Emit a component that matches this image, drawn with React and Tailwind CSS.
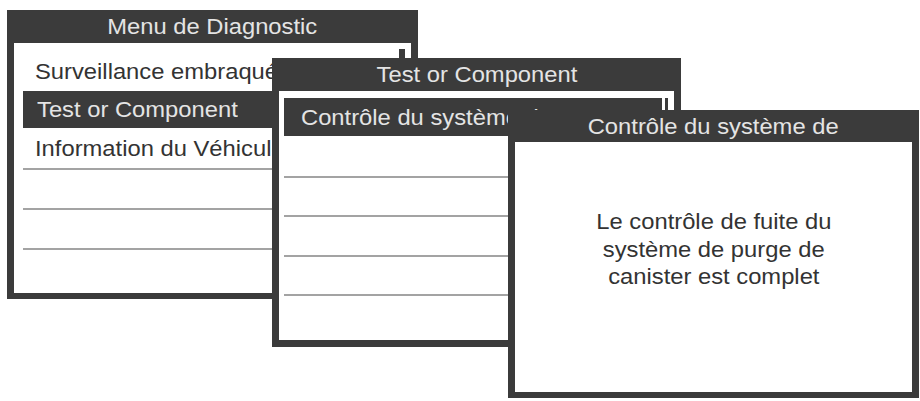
import React from "react";

const font = { fontFamily: '"Liberation Sans", Arial, Helvetica, sans-serif' };

function Line() {
  return <div className="h-[2px] bg-[#a3a3a3]" />;
}

function T({ children, center }) {
  return (
    <span
      className={
        center
          ? "inline-block scale-x-[1.08] origin-center whitespace-nowrap"
          : "inline-block scale-x-[1.08] origin-left whitespace-nowrap"
      }
    >
      {children}
    </span>
  );
}

export default function App() {
  return (
    <div
      className="relative w-[920px] h-[401px] overflow-hidden bg-white text-[#333333]"
      style={font}
    >
      {/* Window 1 */}
      <div className="absolute left-[7px] top-[10px] w-[411px] h-[289px] flex flex-col bg-[#3b3b3b] px-[7px] pb-[6px]">
        <div className="h-[33px] shrink-0 flex items-center justify-center text-[22px] text-[#e4e4e4]">
          <T center>Menu de Diagnostic</T>
        </div>
        <div className="relative flex-1 bg-white pt-[9px] pl-[9px] pr-[16px] flex flex-col text-[22px] whitespace-nowrap">
          <div className="absolute left-[385px] top-[6px] w-[6px] h-[14px] bg-[#3b3b3b]" />
          <div className="h-[39px] flex items-center px-[12px]">
            <T>Surveillance embraquée</T>
          </div>
          <div className="h-[37px] flex items-center px-[14px] bg-[#3b3b3b] text-[#e4e4e4]">
            <T>Test or Component</T>
          </div>
          <div className="h-[40px] flex items-center px-[12px]">
            <T>Information du Véhicule</T>
          </div>
          <Line />
          <div className="h-[38px]" />
          <Line />
          <div className="h-[38px]" />
          <Line />
        </div>
      </div>

      {/* Window 2 */}
      <div className="absolute left-[272px] top-[58px] w-[409px] h-[289px] flex flex-col bg-[#3b3b3b] px-[7px] pb-[7px]">
        <div className="h-[33px] shrink-0 flex items-center justify-center text-[22px] text-[#e4e4e4]">
          <T center>Test or Component</T>
        </div>
        <div className="relative flex-1 bg-white pt-[7px] pl-[5px] pr-[6px] flex flex-col text-[22px] whitespace-nowrap">
          <div className="h-[38px] flex items-center pl-[17px] bg-[#3b3b3b] text-[#e4e4e4] overflow-hidden">
            <T>Contrôle du système de purge</T>
          </div>
          <div className="absolute left-[383px] top-[6px] w-[3px] h-[14px] bg-white" />
          <div className="h-[40px]" />
          <Line />
          <div className="h-[37px]" />
          <Line />
          <div className="h-[38px]" />
          <Line />
          <div className="h-[37px]" />
          <Line />
        </div>
      </div>

      {/* Window 3 */}
      <div className="absolute left-[508px] top-[110px] w-[411px] h-[288px] flex flex-col bg-[#3b3b3b] px-[7px] pb-[6px]">
        <div className="h-[32px] shrink-0 flex items-center justify-center text-[22px] text-[#e4e4e4]">
          <T center>Contrôle du système de</T>
        </div>
        <div className="flex-1 bg-white pt-[66px] flex flex-col items-center text-center text-[22px] leading-[27.5px]">
          <T center>Le contrôle de fuite du</T>
          <T center>système de purge de</T>
          <T center>canister est complet</T>
        </div>
      </div>
    </div>
  );
}
